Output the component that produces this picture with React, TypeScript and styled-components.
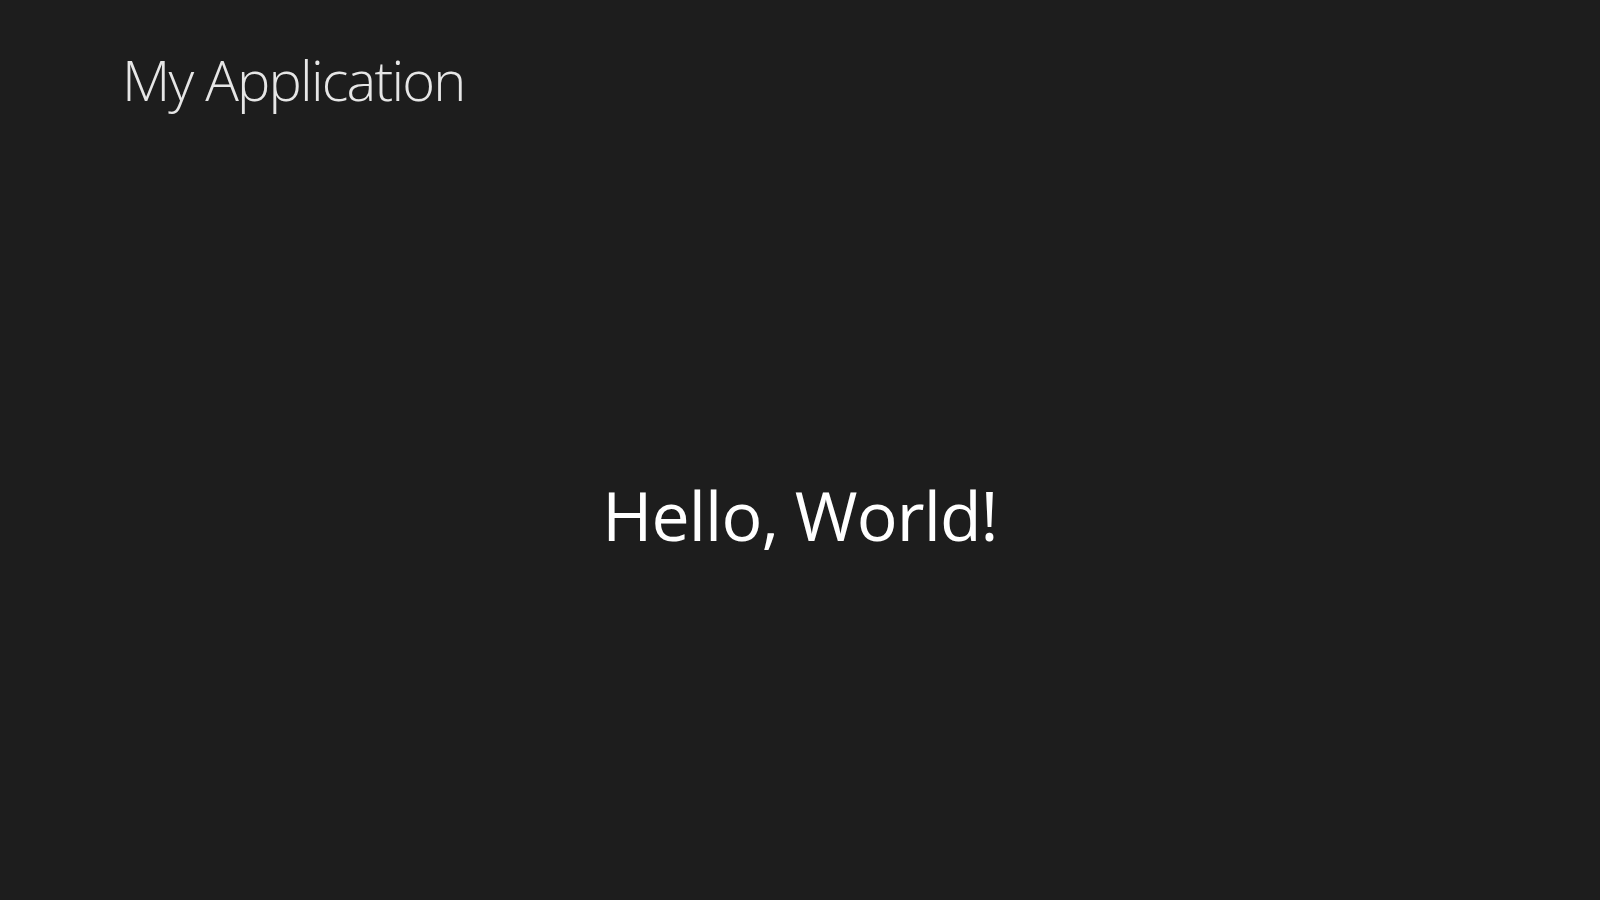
import React from "react";
import styled, { createGlobalStyle } from "styled-components";

const Global = createGlobalStyle`
  html, body { margin: 0; padding: 0; background: #1d1d1d; }
  #root { height: 100vh; }
`;

const Page = styled.div`
  height: 100vh;
  display: flex;
  flex-direction: column;
  background: #1d1d1d;
  font-family: "Open Sans", "Segoe UI", sans-serif;
  color: #ffffff;
  overflow: hidden;
`;

const Header = styled.header`
  padding: 41px 0 0 122px;
`;

const Title = styled.h1`
  margin: 0;
  font-size: 56px;
  font-weight: 300;
  line-height: 76px;
  letter-spacing: -1.8px;
  color: #e6e6e6;
`;

const Main = styled.main`
  flex: 1;
  display: flex;
  align-items: center;
  justify-content: center;
  padding-top: 12px;
`;

const Greeting = styled.p`
  margin: 0;
  font-size: 68px;
  font-weight: 400;
  line-height: 93px;
  letter-spacing: -0.9px;
`;

export default function App() {
  return (
    <>
      <Global />
      <Page>
        <Header>
          <Title>My Application</Title>
        </Header>
        <Main>
          <Greeting>Hello, World!</Greeting>
        </Main>
      </Page>
    </>
  );
}
